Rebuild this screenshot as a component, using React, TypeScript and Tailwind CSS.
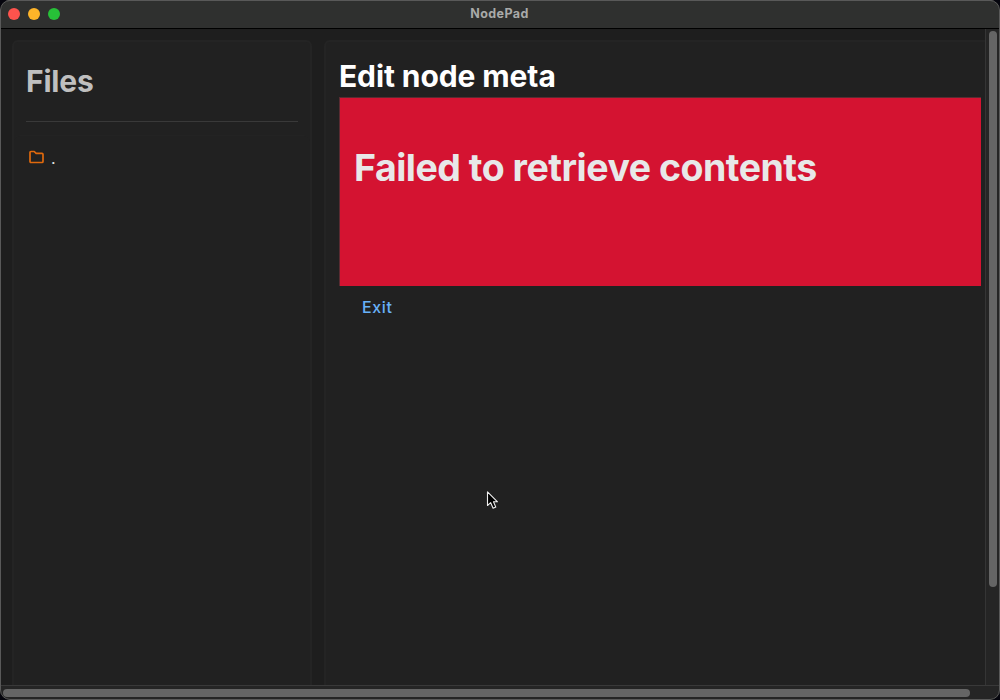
import React from "react";

function TitleBar() {
  return (
    <header className="grid h-[29px] shrink-0 grid-cols-[1fr_auto_1fr] items-center border-b border-t border-b-black border-t-[#686968] bg-[#2f302f] px-2 pb-[2px]">
      <div className="flex gap-2">
        <span className="h-3 w-3 rounded-full bg-[#fe534d]" />
        <span className="h-3 w-3 rounded-full bg-[#feb429]" />
        <span className="h-3 w-3 rounded-full bg-[#27c138]" />
      </div>
      <span className="pr-px text-[12.5px] font-bold leading-4 tracking-[0.4px] text-[#a9aaa9]">NodePad</span>
      <span />
    </header>
  );
}

function FilesPanel() {
  return (
    <aside className="flex w-[300px] shrink-0 flex-col rounded-t-[6px] border-2 border-b-0 border-[#242424] bg-[#212121]">
      <div className="flex h-[93px] flex-col px-3 pt-[21px]">
        <h1 className="whitespace-nowrap text-[30px] font-bold leading-9 tracking-[-0.2px] text-[#bfbfbf]">Files</h1>
        <hr className="mt-[22px] border-[#393939]" />
      </div>
      <div className="flex flex-1 items-start rounded-t-[6px] border-t border-[#232323] px-[14px] pt-[14px]">
        <svg className="h-[14px] w-4 shrink-0" viewBox="0 0 16 14" fill="none">
          <path d="M3 1.5H6.2L8.1 3.4H14Q15 3.4 15 4.4V11.5Q15 12.5 14 12.5H3Q2 12.5 2 11.5V2.5Q2 1.5 3 1.5Z" stroke="#df690d" strokeWidth="1.7" strokeLinejoin="round" />
        </svg>
        <span className="ml-[7px] text-base leading-4 text-[#e1e1e1]">.</span>
      </div>
    </aside>
  );
}

function EditorPanel() {
  return (
    <main className="ml-3 flex min-w-0 flex-1 flex-col rounded-tl-[6px] border-l-2 border-t-2 border-[#242424] bg-[#212121] pl-[13px] pr-1 pt-4">
      <h2 className="whitespace-nowrap text-[30px] font-bold leading-9 tracking-[-0.1px] text-white">Edit node meta</h2>
      <section className="mt-[3px] h-[189px] border-l border-t border-[#592c32] bg-[#d41331] pl-[14px] pt-[46px]">
        <h1 className="whitespace-nowrap text-[37.5px] font-bold leading-[48px] tracking-[-0.5px] text-[#e8e8e8]">Failed to retrieve contents</h1>
      </section>
      <button className="ml-[23px] mt-[9px] self-start text-base font-medium leading-6 tracking-[0.6px] text-[#68b1f8]">Exit</button>
    </main>
  );
}

export default function App() {
  return (
    <div className="h-[700px] w-[1000px] overflow-hidden bg-[#05050d]">
      <div className="relative flex h-full flex-col overflow-hidden rounded-[10px] bg-[#1e1e1e] font-['Inter',sans-serif]">
        <TitleBar />
        <div className="flex min-h-0 flex-1">
          <div className="flex min-w-0 flex-1 border-l border-[#494949] pl-[11px] pt-[11px]">
            <FilesPanel />
            <EditorPanel />
          </div>
          <div className="w-[15px] shrink-0 border-l border-r border-l-[#353535] border-r-[#494949] bg-[#252525] pl-[3px] pt-[2px]">
            <div className="h-[556px] w-2 rounded-full bg-[#656565]" />
          </div>
        </div>
        <div className="h-[15px] shrink-0 border border-[#393939] bg-[#252525] pl-[2px] pt-[3px]">
          <div className="h-2 w-[967px] rounded-full bg-[#656565]" />
        </div>
        <div className="pointer-events-none absolute inset-0 rounded-[10px] border border-[#595959]" />
        <svg className="absolute left-[486px] top-[490px] h-5 w-[14px]" viewBox="0 0 14 20">
          <path d="M1.5 1.8V15.5L4.7 12.7L7.1 18.3L9.8 17.1L7.5 11.8H11.5Z" fill="#000" stroke="#eee" strokeWidth="1.1" strokeLinejoin="round" />
        </svg>
      </div>
    </div>
  );
}
